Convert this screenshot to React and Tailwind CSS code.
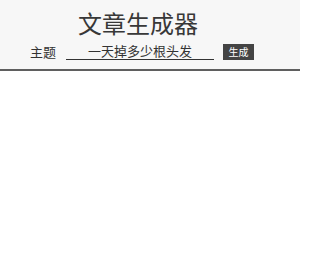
import React from "react";

export default function App() {
  const font = { fontFamily: '"Noto Sans CJK SC", "Noto Sans", sans-serif' };
  return (
    <div className="w-[300px] h-[260px] bg-white" style={font}>
      <div className="bg-[#f7f7f7] border-b-2 border-[#5f5f5f] h-[71px]">
        <div className="pl-[78px] pt-[7px] text-[24px] leading-[32px] text-[#383838]">文章生成器</div>
        <div className="flex items-center pl-[30px] mt-[4px] h-[17px]">
          <span className="text-[13px] leading-[17px] text-[#333]">主题</span>
          <div className="ml-[10px] w-[148px] h-[17px] border-b border-[#333] text-center text-[13px] leading-[16px] text-[#333]">
            一天掉多少根头发
          </div>
          <button className="ml-[9px] w-[31px] h-[16px] bg-[#444] text-white text-[10px] leading-[16px]">生成</button>
        </div>
      </div>
    </div>
  );
}
